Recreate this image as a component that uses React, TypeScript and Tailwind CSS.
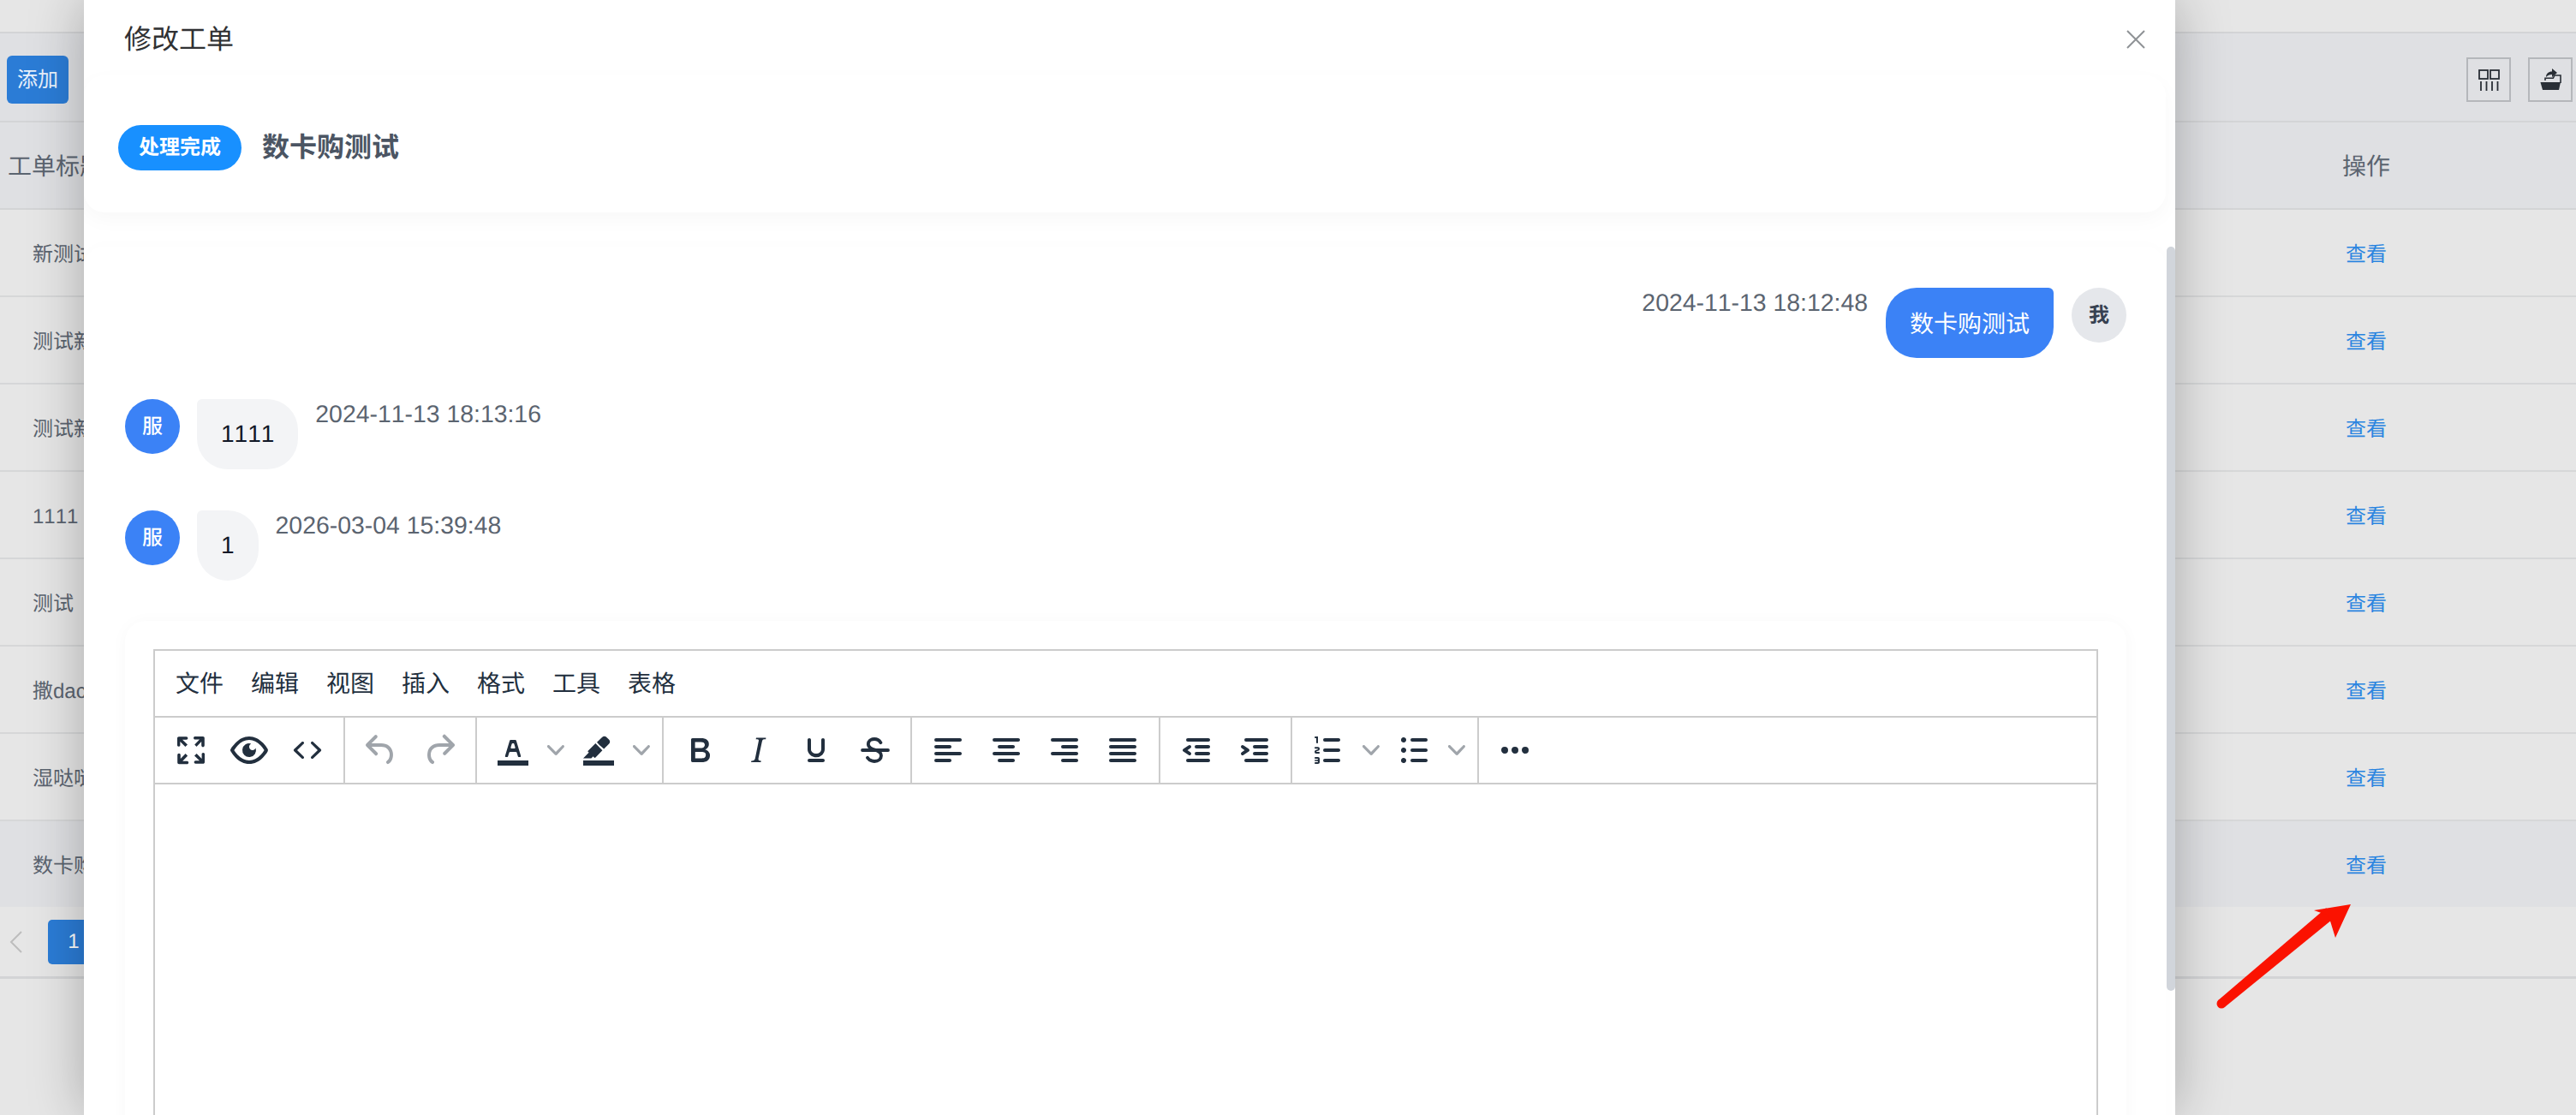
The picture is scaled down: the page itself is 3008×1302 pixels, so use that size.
import React from 'react';

const INK = '#222f3e';

const paths: Record<string, string> = {
  fullscreen: 'M15.3 10l-1.2-1.3 2.9-3h-2.3a.9.9 0 1 1 0-1.7H19c.5 0 .9.4.9.9v4.4a.9.9 0 1 1-1.8 0V7l-2.9 3zm0 4l3 3v-2.3a.9.9 0 1 1 1.7 0V19c0 .5-.4.9-.9.9h-4.4a.9.9 0 1 1 0-1.8H17l-3-2.9 1.3-1.2zM10 15.4l-2.9 3h2.3a.9.9 0 1 1 0 1.7H5a.9.9 0 0 1-.9-.9v-4.4a.9.9 0 1 1 1.8 0V17l2.9-3 1.2 1.3zM8.7 10L5.7 7v2.3a.9.9 0 0 1-1.7 0V5c0-.5.4-.9.9-.9h4.4a.9.9 0 0 1 0 1.8H7l3 2.9-1.3 1.2z',
  preview: 'M3.5 12.5c.5.8 1.1 1.6 1.8 2.3 2 2 4.2 3.2 6.7 3.2s4.7-1.2 6.7-3.2a16.2 16.2 0 0 0 2.1-2.8 15.7 15.7 0 0 0-2.1-2.8c-2-2-4.2-3.2-6.7-3.2a9.3 9.3 0 0 0-6.7 3.2A16.2 16.2 0 0 0 3.2 12c0 .2.2.3.3.5zm-2.4-1l.7-1.2L4 7.8C6.2 5.4 8.9 4 12 4c3 0 5.8 1.4 8.1 3.8a18.2 18.2 0 0 1 2.8 3.7v1l-.7 1.2-2.1 2.5c-2.3 2.4-5 3.8-8.1 3.8-3 0-5.8-1.4-8.1-3.8a18.2 18.2 0 0 1-2.8-3.7 1 1 0 0 1 0-1zm12-3.3a2 2 0 1 0 2.7 2.6 4 4 0 1 1-2.6-2.6z',
  code: 'M9.8 15.7c.3.3.3.8 0 1-.3.4-.9.4-1.2 0l-4.4-4.1a.8.8 0 0 1 0-1.2l4.4-4.2c.3-.3.9-.3 1.2 0 .3.3.3.8 0 1.1L6 12l3.8 3.7zm4.4 0c-.3.3-.3.8 0 1 .3.4.9.4 1.2 0l4.4-4.1a.8.8 0 0 0 0-1.2l-4.4-4.2a.8.8 0 0 0-1.2 0c-.3.3-.3.8 0 1.1L18 12l-3.8 3.7z',
  undo: 'M6.4 8H12c3.7 0 6.2 2 6.8 5.1.6 2.7-.4 5.6-2.3 6.8a1 1 0 0 1-1-1.8c1.1-.6 1.8-2.7 1.4-4.6-.5-2.1-2.1-3.5-4.9-3.5H6.4l3.3 3.3a1 1 0 1 1-1.4 1.4l-5-5a1 1 0 0 1 0-1.4l5-5a1 1 0 0 1 1.4 1.4L6.4 8z',
  redo: 'M17.6 10H12c-2.8 0-4.4 1.4-4.9 3.5-.4 2 .3 4 1.4 4.6a1 1 0 1 1-1 1.8c-2-1.2-2.9-4.1-2.3-6.8.6-3 3-5.1 6.8-5.1h5.6l-3.3-3.3a1 1 0 1 1 1.4-1.4l5 5a1 1 0 0 1 0 1.4l-5 5a1 1 0 0 1-1.4-1.4l3.3-3.3z',
  forecolor: 'M3 18h18v3H3zM8.7 16h-.8a.5.5 0 0 1-.5-.6l2.7-9c.1-.3.3-.4.5-.4h2.8c.2 0 .4.1.5.4l2.7 9a.5.5 0 0 1-.5.6h-.8a.5.5 0 0 1-.4-.4l-.7-2.2c0-.3-.3-.4-.5-.4h-3.4c-.2 0-.4.1-.5.4l-.7 2.2c0 .3-.2.4-.4.4zm2.6-7.6l-.6 2a.5.5 0 0 0 .5.6h1.6a.5.5 0 0 0 .5-.6l-.6-2c0-.3-.3-.4-.5-.4h-.4c-.2 0-.4.1-.5.4z',
  highlight: 'M3 18h18v3H3zM7.7 16.7H3l3.3-3.3-.7-.8L10.2 8l4 4.1-4 4.2c-.2.2-.6.2-.8 0l-.6-.7-1.1 1.1zm5-7.5L11 7.4l3-2.9a2 2 0 0 1 2.7 0L18 5.7a2 2 0 0 1 0 2.7l-2.9 2.9-2.3-2.1z',
  bold: 'M7.8 19c-.3 0-.5 0-.6-.2l-.2-.5V5.7c0-.2 0-.4.2-.5l.6-.2h5c1.5 0 2.7.3 3.5 1 .7.6 1.1 1.4 1.1 2.5a3 3 0 0 1-.6 1.9c-.4.6-1 1-1.6 1.2.4.1.9.3 1.3.6s.8.7 1 1.2c.4.4.5 1 .5 1.6 0 1.3-.4 2.3-1.3 3-.8.7-2.1 1-3.8 1H7.8zm5-8.3c.6 0 1.2-.1 1.6-.5.4-.3.6-.7.6-1.3 0-1.1-.8-1.7-2.3-1.7H9.3v3.5h3.4zm.5 6c.7 0 1.3-.1 1.7-.4.4-.4.6-.9.6-1.5s-.2-1-.7-1.4c-.4-.3-1-.4-2-.4H9.4v3.8h4z',
  italic: 'M16.7 4.7l-.1.9h-.3c-.6 0-1 0-1.4.3-.3.3-.4.6-.5 1.1l-2.1 9.8v.6c0 .5.4.8 1.4.8h.2l-.2.8H8l.2-.8h.2c1.1 0 1.8-.5 2-1.5l2-9.8.1-.5c0-.6-.4-.8-1.4-.8h-.3l.2-.9h5.8z',
  underline: 'M16 5c.6 0 1 .4 1 1v5.5a4 4 0 0 1-.4 1.8l-1 1.4a5.3 5.3 0 0 1-5.5 1 5 5 0 0 1-1.6-1c-.5-.4-.8-.9-1.1-1.4a4 4 0 0 1-.4-1.8V6c0-.6.4-1 1-1s1 .4 1 1v5.5c0 .3 0 .6.2 1l.6.7a3.3 3.3 0 0 0 2.2.8 3.4 3.4 0 0 0 2.2-.8c.3-.2.4-.5.6-.8l.2-.9V6c0-.6.4-1 1-1zM8 17h8c.6 0 1 .4 1 1s-.4 1-1 1H8a1 1 0 0 1 0-2z',
  left: 'M5 5h14c.6 0 1 .4 1 1s-.4 1-1 1H5a1 1 0 1 1 0-2zm0 4h8c.6 0 1 .4 1 1s-.4 1-1 1H5a1 1 0 1 1 0-2zm0 8h8c.6 0 1 .4 1 1s-.4 1-1 1H5a1 1 0 0 1 0-2zm0-4h14c.6 0 1 .4 1 1s-.4 1-1 1H5a1 1 0 0 1 0-2z',
  center: 'M5 5h14c.6 0 1 .4 1 1s-.4 1-1 1H5a1 1 0 1 1 0-2zm3 4h8c.6 0 1 .4 1 1s-.4 1-1 1H8a1 1 0 1 1 0-2zm0 8h8c.6 0 1 .4 1 1s-.4 1-1 1H8a1 1 0 0 1 0-2zm-3-4h14c.6 0 1 .4 1 1s-.4 1-1 1H5a1 1 0 0 1 0-2z',
  right: 'M5 5h14c.6 0 1 .4 1 1s-.4 1-1 1H5a1 1 0 1 1 0-2zm6 4h8c.6 0 1 .4 1 1s-.4 1-1 1h-8a1 1 0 0 1 0-2zm0 8h8c.6 0 1 .4 1 1s-.4 1-1 1h-8a1 1 0 0 1 0-2zm-6-4h14c.6 0 1 .4 1 1s-.4 1-1 1H5a1 1 0 0 1 0-2z',
  justify: 'M5 5h14c.6 0 1 .4 1 1s-.4 1-1 1H5a1 1 0 1 1 0-2zm0 4h14c.6 0 1 .4 1 1s-.4 1-1 1H5a1 1 0 1 1 0-2zm0 4h14c.6 0 1 .4 1 1s-.4 1-1 1H5a1 1 0 0 1 0-2zm0 4h14c.6 0 1 .4 1 1s-.4 1-1 1H5a1 1 0 0 1 0-2z',
  outdent: 'M7 5h12c.6 0 1 .4 1 1s-.4 1-1 1H7a1 1 0 1 1 0-2zm5 4h7c.6 0 1 .4 1 1s-.4 1-1 1h-7a1 1 0 0 1 0-2zm0 4h7c.6 0 1 .4 1 1s-.4 1-1 1h-7a1 1 0 0 1 0-2zm-5 4h12a1 1 0 0 1 0 2H7a1 1 0 0 1 0-2zm1.6-3.8a1 1 0 0 1-1.2 1.6l-3-2a1 1 0 0 1 0-1.6l3-2a1 1 0 0 1 1.2 1.6L6.8 12l1.8 1.2z',
  indent: 'M7 5h12c.6 0 1 .4 1 1s-.4 1-1 1H7a1 1 0 1 1 0-2zm5 4h7c.6 0 1 .4 1 1s-.4 1-1 1h-7a1 1 0 0 1 0-2zm0 4h7c.6 0 1 .4 1 1s-.4 1-1 1h-7a1 1 0 0 1 0-2zm-5 4h12a1 1 0 0 1 0 2H7a1 1 0 0 1 0-2zm-2.6-3.8L6.2 12l-1.8-1.2a1 1 0 0 1 1.2-1.6l3 2a1 1 0 0 1 0 1.6l-3 2a1 1 0 1 1-1.2-1.6z',
  numlist: 'M10 17h8c.6 0 1 .4 1 1s-.4 1-1 1h-8a1 1 0 0 1 0-2zm0-6h8c.6 0 1 .4 1 1s-.4 1-1 1h-8a1 1 0 0 1 0-2zm0-6h8c.6 0 1 .4 1 1s-.4 1-1 1h-8a1 1 0 1 1 0-2zM6 4v3.5c0 .3-.2.5-.5.5a.5.5 0 0 1-.5-.5V5h-.5a.5.5 0 0 1 0-1H6zm-1 8.8l.2.2h1.3c.3 0 .5.2.5.5s-.2.5-.5.5H4.9a1 1 0 0 1-.9-1V13c0-.4.3-.8.6-1l1.2-.4.2-.3a.2.2 0 0 0-.2-.2H4.5a.5.5 0 0 1-.5-.5c0-.3.2-.5.5-.5h1.6c.5 0 .9.4.9 1v.1c0 .4-.3.8-.6 1l-1.2.4-.2.3zM7 17v2c0 .6-.4 1-1 1H4.5a.5.5 0 0 1 0-1h1.2c.2 0 .3-.1.3-.3 0-.2-.1-.3-.3-.3H4.4a.4.4 0 1 1 0-.8h1.3c.2 0 .3-.1.3-.3 0-.2-.1-.3-.3-.3H4.5a.5.5 0 1 1 0-1H6c.6 0 1 .4 1 1z',
  bullist: 'M11 5h8c.6 0 1 .4 1 1s-.4 1-1 1h-8a1 1 0 0 1 0-2zm0 6h8c.6 0 1 .4 1 1s-.4 1-1 1h-8a1 1 0 0 1 0-2zm0 6h8c.6 0 1 .4 1 1s-.4 1-1 1h-8a1 1 0 0 1 0-2zM4.5 6c0-.4.1-.8.4-1 .3-.4.7-.5 1.1-.5.4 0 .8.1 1 .4.4.3.5.7.5 1.1 0 .4-.1.8-.4 1-.3.4-.7.5-1.1.5-.4 0-.8-.1-1-.4-.4-.3-.5-.7-.5-1.1zm0 6c0-.4.1-.8.4-1 .3-.4.7-.5 1.1-.5.4 0 .8.1 1 .4.4.3.5.7.5 1.1 0 .4-.1.8-.4 1-.3.4-.7.5-1.1.5-.4 0-.8-.1-1-.4-.4-.3-.5-.7-.5-1.1zm0 6c0-.4.1-.8.4-1 .3-.4.7-.5 1.1-.5.4 0 .8.1 1 .4.4.3.5.7.5 1.1 0 .4-.1.8-.4 1-.3.4-.7.5-1.1.5-.4 0-.8-.1-1-.4-.4-.3-.5-.7-.5-1.1z',
  more: 'M6 10a2 2 0 0 0-2 2c0 1.1.9 2 2 2a2 2 0 0 0 2-2 2 2 0 0 0-2-2zm12 0a2 2 0 0 0-2 2c0 1.1.9 2 2 2a2 2 0 0 0 2-2 2 2 0 0 0-2-2zm-6 0a2 2 0 0 0-2 2c0 1.1.9 2 2 2a2 2 0 0 0 2-2 2 2 0 0 0-2-2z',
};

const Tool: React.FC<{ name: string; muted?: boolean }> = ({ name, muted }) => (
  <span className="w-[68px] h-[76px] flex items-center justify-center shrink-0">
    <svg width="48" height="48" viewBox="0 0 24 24" fill={muted ? '#a0a5ab' : INK}>
      <path fillRule="evenodd" d={paths[name]} />
    </svg>
  </span>
);

const Strike = () => (
  <span className="w-[68px] h-[76px] flex items-center justify-center shrink-0">
    <svg width="48" height="48" viewBox="0 0 24 24" fill="none" stroke={INK} strokeWidth="1.9" strokeLinecap="round">
      <path d="M15.7 7.6c-.8-1.3-2.1-2.1-3.7-2.1-2.2 0-3.6 1.2-3.6 3 0 1.9 1.7 2.6 3.6 3.2 2.1.6 4 1.3 4 3.4 0 2-1.6 3.4-4 3.4-1.7 0-3.1-.8-4-2.1" />
      <path d="M5 12h15" />
    </svg>
  </span>
);

const Chevron = () => (
  <span className="w-[32px] h-[76px] flex items-center justify-center shrink-0">
    <svg width="20" height="20" viewBox="0 0 10 10" fill="#a0a5ab">
      <path d="M8.7 2.2c.3-.3.8-.3 1 0 .4.4.4.9 0 1.2L5.7 7.8c-.3.3-.9.3-1.2 0L.2 3.4a.8.8 0 0 1 0-1.2c.3-.3.8-.3 1.1 0L5 6l3.7-3.8z" />
    </svg>
  </span>
);

const Group: React.FC<{ children: React.ReactNode }> = ({ children }) => (
  <div className="flex items-center h-full border-r-2 border-[#cccccc] px-[8px]">{children}</div>
);

const rows = ['新测试', '测试新', '测试新', '1111', '测试', '撒dac', '湿哒哒'];
const menus = ['文件', '编辑', '视图', '插入', '格式', '工具', '表格'];

const Background = () => (
  <div className="w-[3008px] h-[1302px] bg-[#e6e6e6] text-[24px] text-[#5b6470]">
    <div className="h-[39px] border-b-2 border-[#d3d4d6]" />
    <div className="h-[104px] border-b-2 border-[#d3d4d6] bg-[#dfe0e3] flex items-center justify-between pl-[8px] pr-[4px] pt-[6px]">
      <button className="w-[72px] h-[56px] rounded-[6px] bg-[#2b7cd6] text-[#e8f1fb] text-[24px]">添加</button>
      <div className="flex gap-[20px]">
        <span className="w-[52px] h-[52px] border-2 border-[#b5b7bb] flex items-center justify-center">
          <svg width="25" height="25" viewBox="0 0 25 25" fill="none" stroke="#2a2f36" strokeWidth="1.8">
            <rect x="1" y="1" width="10" height="10" />
            <rect x="14" y="1" width="10" height="10" />
            <path d="M3 14v11M9.5 14v11M16 14v11M22.5 14v11" />
          </svg>
        </span>
        <span className="w-[52px] h-[52px] border-2 border-[#b5b7bb] flex items-center justify-center">
          <svg width="27" height="28" viewBox="0 0 27 28" fill="#2a2f36">
            <path d="M7 15v-2.7h9.3L18 9h7v9" fill="none" stroke="#2a2f36" strokeWidth="1.6" />
            <path d="M1.5 17H25l-2 9H4z" />
            <path d="M8 11C8 7 11 4.5 15 4.5V1l6 5-6 5V8c-3 0-5 1-7 3z" />
          </svg>
        </span>
      </div>
    </div>
    <div className="h-[102px] border-b-2 border-[#d3d4d6] bg-[#dfe0e3] flex items-center text-[28px] pt-[4px]">
      <span className="pl-[9px] flex-1">工单标题</span>
      <span className="w-[490px] text-center">操作</span>
    </div>
    {rows.map((r, i) => (
      <div key={i} className="h-[102px] border-b-2 border-[#d6d7d8] flex items-center pt-[6px]">
        <span className="pl-[38px] flex-1">{r}</span>
        <span className="w-[490px] text-center text-[#2b85e0]">查看</span>
      </div>
    ))}
    <div className="h-[100px] bg-[#dfe0e3] flex items-center pt-[6px]">
      <span className="pl-[38px] flex-1">数卡购测试</span>
      <span className="w-[490px] text-center text-[#2b85e0]">查看</span>
    </div>
    <div className="h-[84px] border-b-[3px] border-[#d3d4d6] flex items-center pl-[11px] gap-[30px]">
      <svg width="15" height="26" viewBox="0 0 15 26" fill="none" stroke="#bdbdbd" strokeWidth="2"><path d="M14 1L2 13l12 12" /></svg>
      <span className="w-[60px] h-[52px] rounded-[5px] bg-[#2b7cd6] text-white flex items-center justify-center">1</span>
    </div>
  </div>
);

const Editor = () => (
  <div className="mt-[47px] -mr-[2px] rounded-[24px] p-[33px] pb-0 bg-white shadow-[0_2px_20px_rgba(0,0,0,0.03)]">
    <div className="border-2 border-[#cccccc] text-[#222f3e] h-[900px] bg-white">
      <div className="h-[78px] flex items-center pl-[24px] gap-[32px] text-[28px] border-b-2 border-[#cccccc] pt-[2px]">
        {menus.map(m => <span key={m}>{m}</span>)}
      </div>
      <div className="h-[78px] flex items-center border-b-2 border-[#cccccc]">
        <Group>
          <Tool name="fullscreen" /><Tool name="preview" /><Tool name="code" />
        </Group>
        <Group>
          <Tool name="undo" muted /><Tool name="redo" muted />
        </Group>
        <Group>
          <Tool name="forecolor" /><Chevron /><Tool name="highlight" /><Chevron />
        </Group>
        <Group>
          <Tool name="bold" /><Tool name="italic" /><Tool name="underline" /><Strike />
        </Group>
        <Group>
          <Tool name="left" /><Tool name="center" /><Tool name="right" /><Tool name="justify" />
        </Group>
        <Group>
          <Tool name="outdent" /><Tool name="indent" />
        </Group>
        <Group>
          <Tool name="numlist" /><Chevron /><Tool name="bullist" /><Chevron />
        </Group>
        <div className="px-[8px]"><Tool name="more" /></div>
      </div>
    </div>
  </div>
);

const Modal = () => (
  <div className="absolute top-0 left-[98px] w-[2442px] h-[1302px] bg-white shadow-[0_0_60px_rgba(0,0,0,0.27)] overflow-hidden">
    <div className="h-[88px] flex items-center justify-between pl-[47px] pr-[34px] pt-[3px] text-[32px] text-[#303133]">
      <span>修改工单</span>
      <svg width="24" height="24" viewBox="0 0 24 24" stroke="#8f9296" strokeWidth="2" fill="none"><path d="M2 2l20 20M22 2L2 22" /></svg>
    </div>
    <div className="w-[2431px] h-[160px] rounded-[24px] bg-white shadow-[0_8px_24px_rgba(0,0,0,0.03)] flex items-center gap-[24px] pl-[40px] pt-[8px]">
      <span className="w-[144px] h-[53px] pt-[2px] rounded-full bg-[#1890ff] text-white text-[24px] font-bold flex items-center justify-center">处理完成</span>
      <span className="text-[32px] font-semibold text-[#4b5563]">数卡购测试</span>
    </div>
    <div className="w-[2431px] mt-[40px] pt-[48px] px-[48px] rounded-[24px] bg-white shadow-[0_0_20px_rgba(0,0,0,0.015)]">
      <div className="flex justify-end h-[82px] mb-[48px] -mr-[2px]">
        <span className="text-[28.4px] leading-[36px] text-[#5b6470] mr-[21px]">2024-11-13 18:12:48</span>
        <div className="h-[82px] px-[28px] pt-[3px] flex items-center rounded-[36px] rounded-tr-[6px] bg-[#3b82f6] text-white text-[28px]">数卡购测试</div>
        <span className="ml-[21px] w-[64px] h-[64px] pt-[2px] rounded-full bg-[#e5e7eb] text-[#374151] text-[24px] font-semibold flex items-center justify-center">我</span>
      </div>
      {[['1111', '2024-11-13 18:13:16'], ['1', '2026-03-04 15:39:48']].map(([m, t], i) => (
        <div key={t} className={`flex h-[82px] ${i === 0 ? 'mb-[48px]' : ''}`}>
          <span className="w-[64px] h-[64px] pt-[2px] rounded-full bg-[#3b82f6] text-white text-[24px] font-medium flex items-center justify-center">服</span>
          <div className="ml-[20px] h-[82px] px-[28px] flex items-center rounded-[36px] rounded-tl-[6px] bg-[#f3f4f6] text-[#111827] text-[28px]">{m}</div>
          <span className="ml-[20px] text-[28.4px] leading-[36px] text-[#5b6470]">{t}</span>
        </div>
      ))}
      <Editor />
    </div>
    <div className="absolute top-[288px] right-0 w-[10px] h-[869px] rounded-full bg-[#d1d5db]" />
  </div>
);

export default function App() {
  return (
    <div className="relative w-[3008px] h-[1302px] overflow-hidden [text-rendering:geometricPrecision] [font-kerning:none]" style={{ fontFamily: '"Liberation Sans", "Noto Sans CJK SC", sans-serif' }}>
      <Background />
      <Modal />
      <svg className="absolute left-[2580px] top-[1045px]" width="180" height="140" viewBox="0 0 180 140" fill="#fb1200">
        <circle cx="14" cy="127" r="5.5" />
        <path d="M17.5 131.2L145.8 26.8 136.2 15.2 10.5 122.8z" />
        <path d="M165 11L122 18L139 24L147 50z" />
      </svg>
    </div>
  );
}
